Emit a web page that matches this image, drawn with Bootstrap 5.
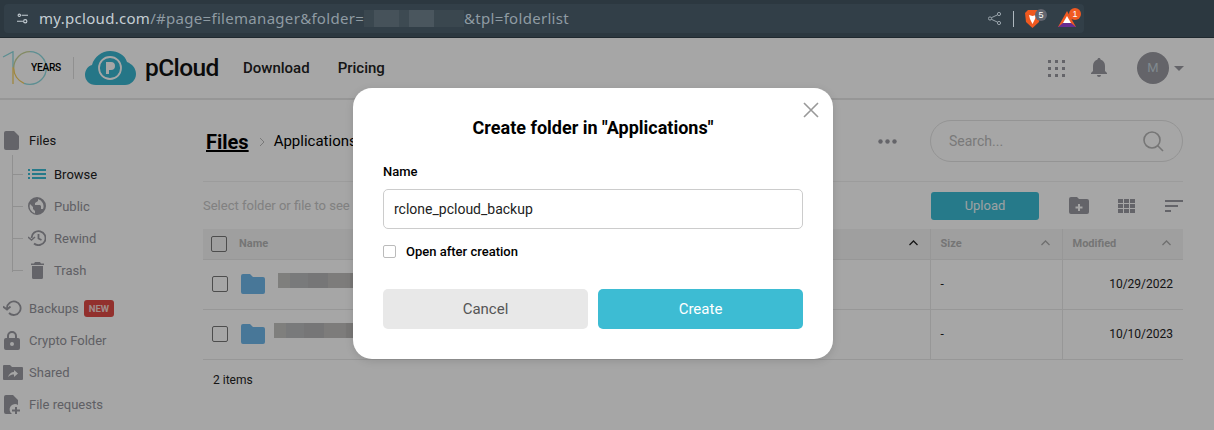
<!DOCTYPE html>
<html lang="en"><head><meta charset="utf-8"><title>pCloud</title>
<link href="https://cdn.jsdelivr.net/npm/bootstrap@5.3.0/dist/css/bootstrap.min.css" rel="stylesheet">
<style>
html,body{height:430px;overflow:hidden}
body{font-family:Roboto,"Liberation Sans",sans-serif;background:#fff;color:#000;font-size:13px;position:relative;width:1214px}
.chrome-bar{height:38px;background:#2c3840;border-bottom:1px solid #20292f;padding:4px 130px 5px 4px}
.url-box{height:29px;background:#323f48;border-radius:4px;padding:0 8px 0 13px;width:1080px;font-family:"Noto Sans",sans-serif;font-size:15px;letter-spacing:.3px;color:#8f9ba3;position:relative}
.url-host{color:#c5ced4}
.mosaic{display:inline-block;width:100px;height:17px;vertical-align:middle;background:linear-gradient(90deg,#3a474f 0 10%,#46525a 10% 35%,#3d4a52 35% 45%,#4a565e 45% 70%,#3a474f 70%)}
.url-ico{margin-right:11px;flex:none}
.ext-sep{width:1px;height:16px;background:#aeb8bf;margin:0 11px 0 12px}
.ext-wrap{position:relative;display:inline-flex}
.ext-badge{position:absolute;width:12px;height:12px;border-radius:50%;font-size:9px;line-height:12px;text-align:center;color:#fff;font-family:"Liberation Sans",sans-serif;letter-spacing:0}
.ext-brave{margin-right:18px}
.ext-brave .ext-badge{background:#62656f;right:-7px;top:-1px}
.ext-bat .ext-badge{background:#f15a22;right:-5px;top:-3px}
.app-head{height:62px;border-bottom:2px solid #e6e6e6;padding-left:2px;padding-right:30px}
.years{font-size:11px;font-weight:500;letter-spacing:-.35px;color:#000;margin-left:-18px;transform:scaleX(.93);width:31px;text-align:center}
.logo-sep{width:1px;height:22px;background:#ddd;margin:0 11px 0 12px}
.cloud-logo{flex:none}
.brand-word{font-size:24.5px;font-weight:500;letter-spacing:-.6px;color:#111;margin-left:9px;width:98px;flex:none}
.top-link{font-size:15px;font-weight:500;color:#222;margin-right:28px;text-decoration:none}
.avatar{width:32px;height:32px;border-radius:50%;background:#9a9aa1;color:#c5d3dc;font-size:13px}
.caret-down{width:0;height:0;border-left:5px solid transparent;border-right:5px solid transparent;border-top:5px solid #9a9aa1;margin-left:5px}
.bell-ico{margin:0 30px 0 25px}
.page-body{height:330px}
.side-nav{width:203px;flex:none;padding-top:24px;position:relative}
.tree-line{position:absolute;left:12px;top:55px;width:1px;height:117px;background:#ddd}
.nav-row{height:32px;display:flex;align-items:center;padding-left:4px;color:#93939a;font-size:13px;line-height:1;white-space:nowrap}
.nav-row .nav-ico{width:25px;flex:none;display:flex}
.nav-top{color:#222;margin-bottom:2px}
.nav-sub{padding-left:12px;position:relative}
.nav-sub::before{content:"";width:11px;height:1px;background:#ddd;flex:none;margin-right:5px}
.nav-sub .nav-ico{width:26px}
.nav-active{color:#222}
.nav-gap{margin-top:6px}
.new-tag{background:#e04b45;color:#f5d9d6;font-size:9.5px;font-weight:700;border-radius:3px;padding:2px 5px;margin-left:5px;line-height:13px}
.main-pane{width:980px;flex:none}
.crumb-row{height:81px;padding-top:20px;align-items:flex-start}
.crumb-title{font-size:20px;font-weight:700;line-height:44px;text-decoration:underline;margin-left:3px;color:#000}
.crumb-chev{margin:17px 0 0 10px}
.crumb-sub{font-size:15px;line-height:42px;color:#000;margin-left:9px}
.more-dots{position:absolute;left:878px;top:139px}
.search-pill{width:253px;height:42px;border:1px solid #e4e4e4;border-radius:21px;padding:0 18px 0 18px;color:#bbb;font-size:14px;margin-left:auto}
.tool-row{height:48px;border-top:1px solid #f0f0f0}
.hint{color:#c6c6c6;font-size:13px}
.btn-upload{width:108px;height:28px;background:#3bbcd4;color:#f0f8fa;font-size:13px;border:0;border-radius:3px;padding:0;margin-left:auto}
.tool-folder{margin-left:30px}
.tool-grid{margin-left:29px}
.tool-sort{margin-left:30px}
.file-table{width:980px;table-layout:fixed;margin:0;font-size:12px;--bs-table-bg:transparent}
.file-table th{height:30px;background:#f4f4f4;color:#b4b4b4;font-weight:700;font-size:11px;padding:0 10px;border-bottom:1px solid #e9e9e9;vertical-align:middle;position:relative}
.file-table th:first-child{padding-left:8px}
.file-table td{height:50px;padding:0 10px;border-bottom:1px solid #e9e9e9;vertical-align:middle;color:#222}
.file-table td:first-child{padding-left:9px}
.file-table .cell-sep{border-left:1px solid #e9e9e9}
.sort-up{position:absolute;right:12px;top:11px}
.box-ico{width:16px;height:16px;border:1px solid #777;border-radius:2px;display:inline-block;vertical-align:middle}
.head-box{margin-right:12px}
.row-box{margin-right:13px}
.folder-ico{vertical-align:middle}
.blur-name{display:inline-block;height:15px;width:100px;margin-top:-8px;vertical-align:middle;background:linear-gradient(90deg,#c4c3c1 0 12%,#bbbcbd 12% 30%,#b5b6b7 30% 50%,#c0bfbd 50% 72%,#b8b7b5 72%)}
.gap-a{margin-right:13px}
.gap-b{margin-right:9px}
.count{padding:11px 10px;font-size:12px;color:#222}
.dim-layer{position:absolute;left:0;right:0;top:38px;bottom:0;background:rgba(0,0,0,.35);padding:50px 0 0 353px}
.dialog-box{width:480px;height:271px;background:#fff;border-radius:19px;padding:30px 30px 0;position:relative;box-shadow:0 2px 8px rgba(0,0,0,.12)}
.dialog-title{font-size:18px;font-weight:700;line-height:20px;text-align:center;margin:0 0 26px;letter-spacing:0}
.close-x{position:absolute;right:14px;top:14px;background:none;border:0;padding:0;line-height:0}
.field-label{font-size:13px;font-weight:500;line-height:15px;display:block;margin-bottom:10px}
.name-input{height:40px;border:1px solid #ccc;border-radius:5px;font-size:14px;padding:0 10px;color:#222;box-shadow:none}
.opt-row{margin:15px 0 30px;font-size:13px;font-weight:500;line-height:15px;height:15px}
.opt-box{width:13px;height:13px;border:1px solid #bbb;border-radius:2px;margin-right:10px}
.dlg-btn{width:205px;height:40px;border:0;border-radius:5px;font-size:15px;padding:0}
.dlg-cancel{background:#e8e8e8;color:#555}
.dlg-create{background:#3dbcd3;color:#fff}
</style></head>
<body>
<div class="chrome-bar">
 <div class="url-box d-flex align-items-center">
  <svg class="url-ico" width="11" height="11" viewBox="0 0 12 12" fill="none" stroke="#c5ced4" stroke-width="1.2"><circle cx="2.5" cy="2.5" r="1.3"/><path d="M5 2.5h7M0 9h6.5"/><circle cx="9" cy="9" r="1.8"/></svg>
  <span class="url-host">my.pcloud.com</span><span>/#page=filemanager&amp;folder=</span><span class="mosaic"></span><span>&amp;tpl=folderlist</span>
  <div class="ms-auto d-flex align-items-center">
   <svg width="13" height="13" viewBox="0 0 13 13" fill="none" stroke="#9aa5ac" stroke-width="1"><circle cx="11" cy="2" r="1.6"/><circle cx="2" cy="6.5" r="1.6"/><circle cx="11" cy="11" r="1.6"/><path d="M3.400 5.700 9.600 2.800M3.400 7.300 9.600 10.200"/></svg>
   <span class="ext-sep"></span>
   <span class="ext-wrap ext-brave"><svg width="15" height="18" viewBox="0 0 15 18"><path d="M3 0h9l3 3-1 9-6.500 6L1 12 0 3z" fill="#f0591f"/><path d="M4 5l3.500 1L11 5l-1 4-2.500 5L5 9z" fill="#fff"/></svg><span class="ext-badge">5</span></span>
   <span class="ext-wrap ext-bat"><svg width="18" height="16" viewBox="0 0 18 16"><path d="M9 0 18 16H0z" fill="#f15a22"/><path d="M0 16l5-4h8l5 4z" fill="#662d91"/><path d="M9 5l4 7H5z" fill="#fff"/></svg><span class="ext-badge">1</span></span>
  </div>
 </div>
</div>
<header class="app-head d-flex align-items-center">
 <svg width="46" height="34" viewBox="0 0 46 34" fill="none" stroke-width="1.300" class="flex-none"><path d="M1 6 11 .7V16" stroke="#8fdbe0"/><path d="M11 16V33" stroke="#f5cf60"/><path d="M28 .7A16.300 16.300 0 0 0 11.700 17" stroke="#c9d59a"/><path d="M11.700 17A16.300 16.300 0 0 0 22 32.300" stroke="#f5cf60"/><path d="M28 .7A16.300 16.300 0 0 1 28 33.300 16 16 0 0 1 22 32.300" stroke="#8fdbe0"/></svg>
 <span class="years">YEARS</span>
 <span class="logo-sep"></span>
 <svg class="cloud-logo" width="51" height="34" viewBox="0 0 51 34"><path d="M11 34C4 34 0 29 0 24c0-5 3-9 7-10C9 6 17 0 25 0c8 0 15 4 17 11 5 2 9 6 9 12 0 6-5 11-11 11z" fill="#39b5cf"/><circle cx="25" cy="17" r="11" fill="none" stroke="#fff" stroke-width="1.800"/><path d="M21 23V11h5a4 4 0 0 1 0 8h-2v4z" fill="#fff"/></svg>
 <span class="brand-word">pCloud</span>
 <a class="top-link" href="#">Download</a>
 <a class="top-link" href="#">Pricing</a>
 <div class="ms-auto d-flex align-items-center">
  <svg width="18" height="17" viewBox="0 0 18 17" fill="#9a9aa1"><rect x="0" y="0" width="3" height="3"/><rect x="7" y="0" width="3" height="3"/><rect x="14" y="0" width="3" height="3"/><rect x="0" y="7" width="3" height="3"/><rect x="7" y="7" width="3" height="3"/><rect x="14" y="7" width="3" height="3"/><rect x="0" y="14" width="3" height="3"/><rect x="7" y="14" width="3" height="3"/><rect x="14" y="14" width="3" height="3"/></svg>
  <svg class="bell-ico" width="16" height="20" viewBox="0 0 16 20" fill="#9a9aa1"><path d="M8 0c1 0 1.500.7 1.500 1.500C12.500 2.300 14 5 14 8v5l2 2v1H0v-1l2-2V8c0-3 1.500-5.700 4.500-6.500C6.500.7 7 0 8 0zM6 17h4a2 2 0 0 1-4 0z"/></svg>
  <div class="avatar d-flex align-items-center justify-content-center">M</div>
  <span class="caret-down"></span>
 </div>
</header>
<div class="page-body d-flex">
 <nav class="side-nav">
  <span class="tree-line"></span>
  <div class="nav-row nav-top"><span class="nav-ico"><svg width="15" height="19" viewBox="0 0 15 19" fill="#9a9aa1"><path d="M2 0h8l5 5v12a2 2 0 0 1-2 2H2a2 2 0 0 1-2-2V2a2 2 0 0 1 2-2z"/></svg></span>Files</div>
  <div class="nav-row nav-sub nav-active"><span class="nav-ico"><svg width="18" height="10" viewBox="0 0 18 10" fill="#3bbcd4"><rect width="2" height="2"/><rect x="4" width="14" height="2"/><rect y="4" width="2" height="2"/><rect x="4" y="4" width="14" height="2"/><rect y="8" width="2" height="2"/><rect x="4" y="8" width="14" height="2"/></svg></span>Browse</div>
  <div class="nav-row nav-sub"><span class="nav-ico"><svg width="18" height="18" viewBox="0 0 18 18" fill="#9a9aa1"><path fill-rule="evenodd" d="M9 0a9 9 0 1 1 0 18A9 9 0 0 1 9 0zM2 7l3 3v2l2 2v2.500A7.500 7.500 0 0 1 2 7zm8-5v2L7 6v2h5l1 1v3h2A7.500 7.500 0 0 0 10 2z"/></svg></span>Public</div>
  <div class="nav-row nav-sub"><span class="nav-ico"><svg width="18" height="16" viewBox="0 0 18 16" fill="none" stroke="#9a9aa1" stroke-width="1.800"><path d="M3.500 8A7 7 0 1 1 6 13.500"/><path d="M10.500 4v4.500l3 1.500"/><path d="M0 7l3.500 3L7 7" stroke-width="1.500"/></svg></span>Rewind</div>
  <div class="nav-row nav-sub"><span class="nav-ico"><svg width="13" height="17" viewBox="0 0 13 17" fill="#9a9aa1" style="margin-left:3px"><path d="M4 0h5l1 1.500h3V3H0V1.500h3zM1 4h11v11.500a1.500 1.500 0 0 1-1.500 1.500h-8A1.500 1.500 0 0 1 1 15.500z"/></svg></span>Trash</div>
  <div class="nav-row nav-gap"><span class="nav-ico"><svg width="19" height="16" viewBox="0 0 19 16" fill="none" stroke="#9a9aa1" stroke-width="1.800" style="margin-left:-1px"><path d="M4 8a6.800 6.800 0 1 1 2 5"/><path d="M0 6.500l4 3 3.500-3"/></svg></span>Backups<span class="new-tag">NEW</span></div>
  <div class="nav-row"><span class="nav-ico"><svg width="16" height="19" viewBox="0 0 16 19" fill="#9a9aa1"><path fill-rule="evenodd" d="M8 0a5 5 0 0 1 5 5v2h1a2 2 0 0 1 2 2v8a2 2 0 0 1-2 2H2a2 2 0 0 1-2-2V9a2 2 0 0 1 2-2h1V5a5 5 0 0 1 5-5zm0 2a3 3 0 0 0-3 3v2h6V5a3 3 0 0 0-3-3zm0 9a2 2 0 1 0 0 4 2 2 0 0 0 0-4z"/></svg></span>Crypto Folder</div>
  <div class="nav-row"><span class="nav-ico"><svg width="20" height="15" viewBox="0 0 20 15" fill="#9a9aa1" style="margin-left:-1px"><path fill-rule="evenodd" d="M1 0h6l2 2h10a1 1 0 0 1 1 1v11a1 1 0 0 1-1 1H1a1 1 0 0 1-1-1V1a1 1 0 0 1 1-1zm10 5v2c-3 0-5 2-6 5 2-2 4-2.500 6-2.500V12l4-3.500z"/></svg></span>Shared</div>
  <div class="nav-row"><span class="nav-ico"><svg width="16" height="19" viewBox="0 0 16 19" fill="#9a9aa1"><path d="M2 0h7l5 5v5a5 5 0 0 0-6 9H2a2 2 0 0 1-2-2V2a2 2 0 0 1 2-2z"/><path d="M11 12h2v2.500h3v2h-3V19h-2v-2.500H8v-2h3z"/></svg></span>File requests</div>
 </nav>
 <main class="main-pane">
  <div class="crumb-row d-flex">
   <span class="crumb-title">Files</span>
   <svg class="crumb-chev" width="6" height="10" viewBox="0 0 6 10" fill="none" stroke="#bbb"><path d="M1 1l4 4-4 4"/></svg>
   <span class="crumb-sub">Applications</span>
   <div class="search-pill d-flex align-items-center">Search...<svg class="ms-auto" width="21" height="21" viewBox="0 0 21 21" fill="none" stroke="#b5b5b5" stroke-width="1.600"><circle cx="9" cy="9" r="8"/><path d="M14.500 14.500 20 20"/></svg></div>
  </div>
  <div class="tool-row d-flex align-items-center">
   <span class="hint">Select folder or file to see</span>
   <button class="btn btn-upload">Upload</button>
   <svg class="tool-folder" width="20" height="17" viewBox="0 0 20 17" fill="#9a9aa1"><path fill-rule="evenodd" d="M2 0h6l2 2h8a2 2 0 0 1 2 2v11a2 2 0 0 1-2 2H2a2 2 0 0 1-2-2V2a2 2 0 0 1 2-2zm7 7v2.500H6.500v2H9V14h2v-2.500h2.500v-2H11V7z"/></svg>
   <svg class="tool-grid" width="17" height="14" viewBox="0 0 17 14" fill="#9a9aa1"><rect width="5" height="4"/><rect x="6" width="5" height="4"/><rect x="12" width="5" height="4"/><rect y="5" width="5" height="4"/><rect x="6" y="5" width="5" height="4"/><rect x="12" y="5" width="5" height="4"/><rect y="10" width="5" height="4"/><rect x="6" y="10" width="5" height="4"/><rect x="12" y="10" width="5" height="4"/></svg>
   <svg class="tool-sort" width="18" height="12" viewBox="0 0 18 12" fill="#9a9aa1"><rect width="18" height="2"/><rect y="5" width="13" height="2"/><rect y="10" width="6" height="2"/></svg>
  </div>
  <table class="table file-table">
   <colgroup><col style="width:727px"><col style="width:132px"><col style="width:121px"></colgroup>
   <thead><tr><th><span class="box-ico head-box"></span>Name<svg class="sort-up" width="9" height="6" viewBox="0 0 9 6" fill="none" stroke="#222" stroke-width="1.300"><path d="M.5 5l4-4 4 4"/></svg></th><th class="cell-sep">Size<svg class="sort-up" width="9" height="6" viewBox="0 0 9 6" fill="none" stroke="#aaa" stroke-width="1.300"><path d="M.5 5l4-4 4 4"/></svg></th><th class="cell-sep">Modified<svg class="sort-up" width="9" height="6" viewBox="0 0 9 6" fill="none" stroke="#aaa" stroke-width="1.300"><path d="M.5 5l4-4 4 4"/></svg></th></tr></thead>
   <tbody>
    <tr><td><span class="box-ico row-box"></span><svg class="folder-ico gap-a" width="24" height="20" viewBox="0 0 24 20" fill="#6fb7ea"><path d="M2 0h7l3 3h10a2 2 0 0 1 2 2v13a2 2 0 0 1-2 2H2a2 2 0 0 1-2-2V2a2 2 0 0 1 2-2z"/></svg><span class="blur-name"></span></td><td class="cell-sep">-</td><td class="cell-sep text-end">10/29/2022</td></tr>
    <tr><td><span class="box-ico row-box"></span><svg class="folder-ico gap-b" width="24" height="20" viewBox="0 0 24 20" fill="#6fb7ea"><path d="M2 0h7l3 3h10a2 2 0 0 1 2 2v13a2 2 0 0 1-2 2H2a2 2 0 0 1-2-2V2a2 2 0 0 1 2-2z"/></svg><span class="blur-name"></span></td><td class="cell-sep">-</td><td class="cell-sep text-end">10/10/2023</td></tr>
   </tbody>
  </table>
  <div class="count">2 items</div>
 </main>
</div>
<svg class="more-dots" width="19" height="5" viewBox="0 0 19 5" fill="#9a9aa1"><circle cx="2.500" cy="2.500" r="2.200"/><circle cx="9.500" cy="2.500" r="2.200"/><circle cx="16.500" cy="2.500" r="2.200"/></svg>
<div class="dim-layer">
 <div class="dialog-box">
  <button class="close-x" aria-label="Close"><svg width="16" height="16" viewBox="0 0 16 16" fill="none" stroke="#999" stroke-width="1.600"><path d="M1 1l14 14M15 1 1 15"/></svg></button>
  <h5 class="dialog-title">Create folder in "Applications"</h5>
  <label class="field-label">Name</label>
  <input class="form-control name-input" type="text" value="rclone_pcloud_backup">
  <div class="opt-row d-flex align-items-center"><span class="opt-box d-inline-block"></span>Open after creation</div>
  <div class="d-flex justify-content-between">
   <button class="btn dlg-btn dlg-cancel">Cancel</button>
   <button class="btn dlg-btn dlg-create">Create</button>
  </div>
 </div>
</div>
<script src="https://cdn.jsdelivr.net/npm/bootstrap@5.3.0/dist/js/bootstrap.bundle.min.js"></script>
</body></html>
